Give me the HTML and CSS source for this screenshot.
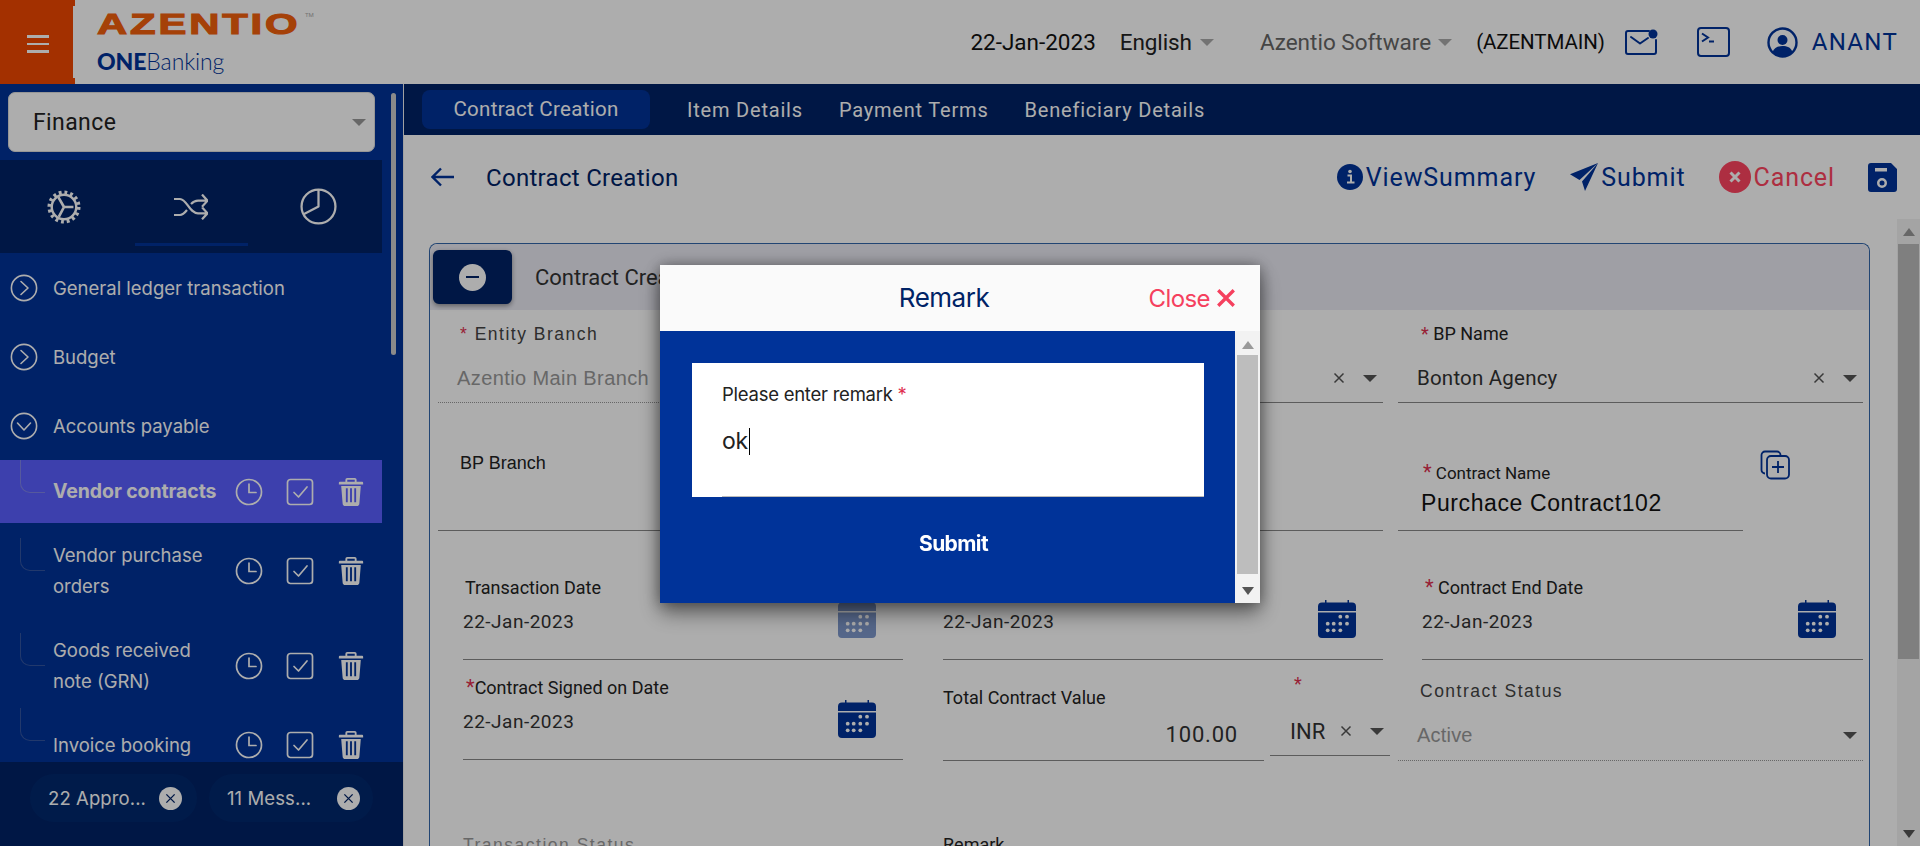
FILE: index.html
```html
<!DOCTYPE html>
<html lang="en">
<head>
<meta charset="utf-8">
<title>Contract Creation</title>
<link rel="stylesheet" href="styles.css">
</head>
<body>
<svg class="sprite" aria-hidden="true">
  <symbol id="cal" viewBox="0 0 38 38">
    <path fill="currentColor" d="M7 0h1.500v2.500h21V0H31v2.500h3a4 4 0 0 1 4 4V11H0V6.500a4 4 0 0 1 4-4h3zM0 12.500h38V34a4 4 0 0 1-4 4H4a4 4 0 0 1-4-4z"/>
    <g fill="#fff"><circle cx="22.300" cy="16.700" r="1.900"/><circle cx="29" cy="16.700" r="1.900"/><circle cx="9.700" cy="23.700" r="1.900"/><circle cx="15.700" cy="23.700" r="1.900"/><circle cx="22.300" cy="23.700" r="1.900"/><circle cx="29" cy="23.700" r="1.900"/><circle cx="9.700" cy="30.300" r="1.900"/><circle cx="15.700" cy="30.300" r="1.900"/><circle cx="22.300" cy="30.300" r="1.900"/></g>
  </symbol>
  <symbol id="clock" viewBox="0 0 28 28"><g fill="none" stroke="currentColor" stroke-width="1.7" stroke-linecap="round"><circle cx="14" cy="14" r="12.5"/><path d="M14 6v8.500h7"/></g></symbol>
  <symbol id="check" viewBox="0 0 28 28"><g fill="none" stroke="currentColor" stroke-width="1.7" stroke-linecap="round" stroke-linejoin="round"><rect x="1.500" y="1.500" width="25" height="25" rx="3"/><path d="M8 14.500l4.500 4.500L21 9"/></g></symbol>
  <symbol id="trash" viewBox="0 0 26 30"><path fill="currentColor" d="M9 0h8a2 2 0 0 1 2 2v2h6a1 1 0 0 1 1 1v2H0V5a1 1 0 0 1 1-1h6V2a2 2 0 0 1 2-2zm0 2v2h8V2zM2.500 8.500h21L22 27a3 3 0 0 1-3 3H7a3 3 0 0 1-3-3zM7.500 11v15h2V11zm4.500 0v15h2V11zm4.500 0v15h2V11z" fill-rule="evenodd"/></symbol>
  <symbol id="cross" viewBox="0 0 12 12"><path d="M1.500 1.500l9 9m0-9l-9 9" fill="none" stroke="currentColor" stroke-width="1.500"/></symbol>
  <symbol id="chev-r" viewBox="0 0 28 28"><g fill="none" stroke="currentColor" stroke-width="1.600" stroke-linecap="round" stroke-linejoin="round"><circle cx="14" cy="14" r="12.600"/><path d="M11 7.500l7 6.500-7 6.500"/></g></symbol>
  <symbol id="chev-d" viewBox="0 0 28 28"><g fill="none" stroke="currentColor" stroke-width="1.600" stroke-linecap="round" stroke-linejoin="round"><circle cx="14" cy="14" r="12.600"/><path d="M7.500 11l6.500 7 6.500-7"/></g></symbol>
</svg>

<header class="topbar">
  <button class="menu-btn" aria-label="Menu"><span></span><span></span><span></span></button>
  <div class="logo">
    <div class="logo-mark"><span class="logo-word">AZENTIO</span><span class="logo-tm">TM</span></div>
    <div class="logo-sub"><b>ONE</b>Banking</div>
  </div>
  <div class="top-right">
    <span class="top-date">22-Jan-2023</span>
    <span class="top-lang">English</span><i class="caret caret-top caret-lang"></i>
    <span class="top-org">Azentio Software</span><i class="caret caret-top caret-org"></i>
    <span class="top-code">(AZENTMAIN)</span>
    <svg class="ico-mail" viewBox="0 0 33 26"><path d="M24 2H3a2 2 0 0 0-2 2v19a2 2 0 0 0 2 2h26a2 2 0 0 0 2-2V11M6 8l9 6.500 8-5.500" fill="none" stroke="currentColor" stroke-width="2" stroke-linecap="round" stroke-linejoin="round"/><circle cx="28" cy="5" r="4.500" fill="currentColor"/></svg>
    <svg class="ico-term" viewBox="0 0 33 30"><rect x="1" y="1" width="31" height="28" rx="3" fill="none" stroke="currentColor" stroke-width="2"/><path d="M5 6.500l6 4-6 4M12 14.500h5" fill="none" stroke="currentColor" stroke-width="2"/></svg>
    <svg class="ico-user" viewBox="0 0 31 31"><circle cx="15.500" cy="15.500" r="14" fill="none" stroke="currentColor" stroke-width="2.400"/><circle cx="15.500" cy="13" r="5" fill="currentColor"/><path d="M5.500 25c1.500-4.500 5.500-6 10-6s8.500 1.500 10 6a14 14 0 0 1-20 0z" fill="currentColor"/></svg>
    <span class="top-user">ANANT</span>
  </div>
</header>

<div class="shell">
  <aside class="sidebar">
    <div class="sidebar-head">
      <div class="module-select"><span>Finance</span><i class="caret caret-grey"></i></div>
      <div class="side-thumb"></div>
    </div>
    <nav class="side-tabs">
      <div class="side-tab">
        <svg class="tab-ico" viewBox="0 0 36 36"><g fill="none" stroke="currentColor"><circle cx="18" cy="18" r="13" stroke-width="2.600"/><circle cx="18" cy="18" r="15.500" stroke-width="4" stroke-dasharray="3 3.090"/><path d="M18 18h10M18 18L12 7.500M18 18L12.500 28.500" stroke-width="2.800"/></g></svg>
      </div>
      <div class="side-tab side-tab-on">
        <svg class="tab-shuffle" viewBox="0 0 34 26"><path d="M0 5h6c7 0 9 14.300 18 14.300h9M0 21h6c3 0 5-2.500 7-5M17 10c2-2 4-3.300 7-3.300h9M28 .5l5.500 6.200-5.500 6M28 13.300l5.500 6-5.500 6" fill="none" stroke="currentColor" stroke-width="2.200" stroke-linejoin="round"/></svg>
      </div>
      <div class="side-tab">
        <svg class="tab-pie" viewBox="0 0 36 36"><g fill="none" stroke="currentColor" stroke-width="2.200" stroke-linejoin="round"><circle cx="18" cy="18" r="16.500"/><path d="M18 1.500V18L3.500 25.500"/></g></svg>
      </div>
    </nav>
    <ul class="side-list">
      <li class="side-row row-group"><svg class="side-chev"><use href="#chev-r"/></svg><span class="row-text">General ledger transaction</span></li>
      <li class="side-row row-group"><svg class="side-chev"><use href="#chev-r"/></svg><span class="row-text">Budget</span></li>
      <li class="side-row row-group"><svg class="side-chev"><use href="#chev-d"/></svg><span class="row-text">Accounts payable</span></li>
      <li class="side-row row-sub row-active"><span class="row-text">Vendor contracts</span><div class="row-acts"><svg class="act"><use href="#clock"/></svg><svg class="act"><use href="#check"/></svg><svg class="act"><use href="#trash"/></svg></div></li>
      <li class="side-row row-sub row-two"><span class="row-text">Vendor purchase orders</span><div class="row-acts"><svg class="act"><use href="#clock"/></svg><svg class="act"><use href="#check"/></svg><svg class="act"><use href="#trash"/></svg></div></li>
      <li class="side-row row-sub row-two"><span class="row-text">Goods received note (GRN)</span><div class="row-acts"><svg class="act"><use href="#clock"/></svg><svg class="act"><use href="#check"/></svg><svg class="act"><use href="#trash"/></svg></div></li>
      <li class="side-row row-sub row-last"><span class="row-text">Invoice booking</span><div class="row-acts"><svg class="act"><use href="#clock"/></svg><svg class="act"><use href="#check"/></svg><svg class="act"><use href="#trash"/></svg></div></li>
    </ul>
    <div class="side-foot">
      <div class="chip chip-a"><span>22 Appro...</span><b class="chip-x"><svg><use href="#cross"/></svg></b></div>
      <div class="chip chip-b"><span>11 Mess...</span><b class="chip-x"><svg><use href="#cross"/></svg></b></div>
    </div>
  </aside>

  <main class="main">
    <nav class="tabs">
      <a class="tab tab-on">Contract Creation</a>
      <a class="tab">Item Details</a>
      <a class="tab">Payment Terms</a>
      <a class="tab">Beneficiary Details</a>
    </nav>
    <div class="title-row">
      <svg class="back" viewBox="0 0 24 20"><path d="M23 10H2M10 1.500L1.500 10l8.500 8.500" fill="none" stroke="currentColor" stroke-width="2.400"/></svg>
      <h1 class="title">Contract Creation</h1>
      <div class="actions">
        <span class="action"><svg class="a-info" viewBox="0 0 26 26"><circle cx="13" cy="13" r="13" fill="currentColor"/><path d="M10.500 11.500h3.500v7M10 18.500h7.500" fill="none" stroke="#fff" stroke-width="2"/><circle cx="13" cy="7.500" r="1.800" fill="#fff"/></svg>ViewSummary</span>
        <span class="action"><svg class="a-send" viewBox="0 0 28 28"><path d="M28 0L0 11.300l9.500 5.700zM28 0L12 18.500 15 28z" fill="currentColor"/></svg>Submit</span>
        <span class="action action-red"><svg class="a-cancel" viewBox="0 0 32 32"><circle cx="16" cy="16" r="16" fill="currentColor"/><path d="M11.500 11.500l9 9m0-9l-9 9" stroke="#fff" stroke-width="3"/></svg>Cancel</span>
        <svg class="a-save" viewBox="0 0 29 29"><path fill="currentColor" fill-rule="evenodd" d="M3 0h20l6 6v20a3 3 0 0 1-3 3H3a3 3 0 0 1-3-3V3a3 3 0 0 1 3-3zM7 5v3.500h12V5zM14 15a5 5 0 1 0 0 10 5 5 0 0 0 0-10zm0 2.500a2.500 2.500 0 1 1 0 5 2.500 2.500 0 0 1 0-5z"/></svg>
      </div>
    </div>
    <div class="scroller">
      <div class="content">
        <section class="card">
          <div class="card-head">
            <button class="collapse" aria-label="Collapse"><span class="minus"></span></button>
            <span class="card-title">Contract Creation</span>
          </div>
          <div class="form">
            <div class="field col-a f-sel dotted">
              <label class="lab lab-spaced lab-ind"><em>*</em> Entity Branch</label>
              <div class="val val-off val-ind">Azentio Main Branch</div>
            </div>
            <div class="field col-b f-sel">
              <div class="val val-end"><svg class="x-ico"><use href="#cross"/></svg><i class="caret caret-dark"></i></div>
            </div>
            <div class="field f-sel">
              <label class="lab lab-bp"><em>*</em> BP Name</label>
              <div class="val val-sel">Bonton Agency<span class="val-tools"><svg class="x-ico"><use href="#cross"/></svg><i class="caret caret-dark"></i></span></div>
            </div>

            <div class="field span-ab f-bp">
              <label class="lab lab-ar lab-ind">BP Branch</label>
              <div class="val"></div>
            </div>
            <div class="name-wrap">
              <div class="field f-name">
                <label class="lab lab-cn"><em class="star-lg">*</em> Contract Name</label>
                <div class="val val-big">Purchace Contract102</div>
              </div>
              <svg class="copy-add" viewBox="0 0 30 30"><g fill="none" stroke="currentColor" stroke-width="1.800"><path d="M5 23.500a3.500 3.500 0 0 1-3.500-3.500V5A3.500 3.500 0 0 1 5 1.500h12A3.500 3.500 0 0 1 20.500 5"/><rect x="7" y="6" width="22" height="22.500" rx="4"/><path d="M18 11v12M12 17h12"/></g></svg>
            </div>

            <div class="field col-a f-date date-ind">
              <label class="lab lab-date lab-td">Transaction Date</label>
              <div class="val val-date">22-Jan-2023<svg class="cal cal-off"><use href="#cal"/></svg></div>
            </div>
            <div class="field col-b f-date">
              <div class="val val-date">22-Jan-2023<svg class="cal"><use href="#cal"/></svg></div>
            </div>
            <div class="field f-date end-ind">
              <label class="lab lab-date lab-end"><em class="star-lg">*</em> Contract End Date</label>
              <div class="val val-date">22-Jan-2023<svg class="cal"><use href="#cal"/></svg></div>
            </div>

            <div class="field col-a f-date date-ind f-signed">
              <label class="lab lab-date lab-signed"><em class="star-lg">*</em>Contract Signed on Date</label>
              <div class="val val-date">22-Jan-2023<svg class="cal"><use href="#cal"/></svg></div>
            </div>
            <div class="amount-wrap">
              <div class="field f-total">
                <label class="lab lab-date">Total Contract Value</label>
                <div class="val val-amount">100.00</div>
              </div>
              <div class="field f-inr">
                <label class="lab lab-star"><em>*</em></label>
                <div class="val val-inr">INR<svg class="x-ico"><use href="#cross"/></svg><i class="caret caret-dark"></i></div>
              </div>
            </div>
            <div class="field f-status dotted">
              <label class="lab lab-spaced lab-ind">Contract Status</label>
              <div class="val val-off val-sel">Active<span class="val-tools"><i class="caret caret-dark"></i></span></div>
            </div>

            <div class="field-open date-ind"><label class="lab lab-spaced lab-faint">Transaction Status</label></div>
            <div class="field-open"><label class="lab lab-date">Remark</label></div>
          </div>
        </section>
      </div>
      <div class="vscroll"><i class="sb-up"></i><div class="vthumb"></div><i class="sb-down"></i></div>
    </div>
  </main>
</div>

<div class="overlay"></div>

<div class="modal" role="dialog" aria-label="Remark">
  <div class="modal-head">
    <h2 class="modal-title">Remark</h2>
    <span class="modal-close">Close<svg viewBox="0 0 18 18"><path d="M2 2l14 14m0-14L2 16" fill="none" stroke="currentColor" stroke-width="3"/></svg></span>
  </div>
  <div class="modal-body">
    <div class="modal-main">
      <div class="remark-box">
        <label class="remark-label">Please enter remark <em>*</em></label>
        <div class="remark-input">ok<span class="text-caret"></span></div>
      </div>
      <div class="modal-submit">Submit</div>
    </div>
    <div class="modal-scroll"><i class="sb-up"></i><div class="modal-thumb"></div><i class="sb-down"></i></div>
  </div>
</div>
</body>
</html>
```
FILE: styles.css
```css
*{box-sizing:border-box}
html,body{margin:0;height:846px;overflow:hidden}
body{display:flex;flex-direction:column;background:#fff;font-family:Roboto,"Liberation Sans",sans-serif;color:#222}
.sprite{position:absolute;width:0;height:0}
em{font-style:normal;color:#e0304f}
ul{list-style:none;margin:0;padding:0}
h1,h2{margin:0;font-weight:400}
button{border:0;padding:0;cursor:pointer}

/* top bar */
.topbar{height:84px;flex:none;display:flex;align-items:stretch;background:#fff}
.menu-btn{width:75px;background:#f04700;display:flex;flex-direction:column;gap:5px;padding:35px 0 0 27px;position:relative}
.menu-btn::after{content:"";position:absolute;right:0;top:6px;bottom:6px;width:2px;background:#fff}
.menu-btn span{display:block;width:22px;height:2.500px;background:#fff}
.logo{margin-left:22px;display:flex;flex-direction:column;padding-top:6px}
.logo-mark{display:flex;height:37px;align-items:center;position:relative}
.logo-word{display:block;font:700 29px/37px "Liberation Sans",sans-serif;letter-spacing:2px;color:#f4600c;-webkit-text-stroke:1.100px #f4600c;transform:scaleX(1.44);transform-origin:0 50%;width:208px}
.logo-tm{font-size:6px;color:#aaa;margin-top:-20px}
.logo-sub{font:300 23px/30px Lato,sans-serif;color:#00339a;margin-top:3px;letter-spacing:-.1px}
.logo-sub b{font-weight:900}
.top-right{margin-left:auto;display:flex;align-items:center;padding-right:22px;height:84px}
.top-date{font-size:22.500px;color:#111;margin-right:24px}
.top-lang{font-size:22.500px;color:#222;margin-right:8px;letter-spacing:-.1px}
.caret{display:block;width:0;height:0;border-style:solid;border-color:transparent;border-width:7px 7px 0}
.caret-top{border-top-color:#aaa;border-width:7px 7.500px 0}
.caret-lang{margin-right:46px}
.top-org{font-size:22.500px;color:#666;margin-right:7px}
.caret-org{margin-right:24px}
.top-code{font-size:20.500px;color:#111;margin-right:20px;letter-spacing:-.1px}
.ico-mail{width:33px;height:26px;color:#00339a;margin-right:39px}
.ico-term{width:33px;height:30px;color:#00339a;margin-right:37px}
.ico-user{width:31px;height:31px;color:#00339a;margin-right:14px}
.top-user{font-size:24px;color:#00339a;letter-spacing:1.300px}

.shell{flex:1;display:flex;min-height:0}

/* sidebar */
.sidebar{width:404px;flex:none;background:#039;display:flex;flex-direction:column;position:relative;overflow:hidden;border-right:1px solid #eee}
.sidebar-head{height:76px;flex:none;padding:8px 0 0 8px;position:relative}
.module-select{width:367px;height:60px;background:#fff;border-radius:7px;border:1px solid #ddd;display:flex;align-items:center;justify-content:space-between;padding:0 8px 0 24px;font-size:23px;color:#222;letter-spacing:.4px}
.caret-grey{border-top-color:#999;border-width:7px 7px 0}
.side-thumb{position:absolute;left:391px;top:9px;width:5px;height:262px;border-radius:3px;background:#ccc}
.side-tabs{width:382px;height:93px;flex:none;background:#002366;display:flex}
.side-tab{flex:1;display:flex;justify-content:center;align-items:center;position:relative;color:#fff}
.side-tab-on::after{content:"";position:absolute;left:8px;right:7px;top:83px;height:3px;background:#039}
.tab-ico{width:34px;height:34px}
.tab-shuffle{width:34px;height:26px}
.tab-pie{width:37px;height:37px}
.side-list{flex:1;min-height:0;overflow:hidden;width:382px}
.side-row{display:flex;align-items:center;color:#fff;font:400 18.500px/31px Inter,sans-serif;position:relative}
.row-group{height:69px;padding-left:10px}
.row-group .row-text{padding-top:2px}
.side-chev{width:28px;height:28px;flex:none;margin-right:15px}
.row-sub{padding-left:53px}
.row-sub .row-text{flex:1;min-width:0}
.row-sub::before{content:"";position:absolute;left:20px;top:15px;height:32px;width:24px;border-left:1.500px solid #3355a0;border-bottom:1.500px solid #3355a0;border-bottom-left-radius:10px}
.row-active{height:63px;background:#5a5fff;font-weight:700;font-size:19.500px;letter-spacing:-.1px}
.row-active::before{top:0;border-color:#7f83e8}
.row-two{height:95px}
.row-two::before{top:15px}
.row-last{height:64px}
.row-last::before{top:-5px;height:32px}
.row-acts{display:flex;width:158px;flex:none;gap:23px;padding-left:11px;align-items:center}
.act{width:28px;height:28px;color:#fff;flex:none}
.side-foot{height:84px;flex:none;background:#002366;display:flex;padding:12px 0 0 30px;gap:12px}
.chip{height:48px;border-radius:24px;background:#00296e;color:#fff;display:flex;align-items:center;font:400 18.500px Inter,sans-serif;padding-left:18px;letter-spacing:.1px}
.chip-a{width:167px}
.chip-b{width:164px}
.chip-x{width:23px;height:23px;border-radius:50%;background:#fff;color:#002366;display:flex;align-items:center;justify-content:center;margin-left:auto;margin-right:15px}
.chip-b .chip-x{margin-right:13px}
.chip-x svg{width:11px;height:11px}

/* main */
.main{flex:1;min-width:0;display:flex;flex-direction:column;background:#fff}
.tabs{height:51px;flex:none;background:#002366;display:flex;align-items:center;padding-left:18px;color:#fff}
.tab{font-size:20px;letter-spacing:.8px;margin-right:36px}
.tab-on{background:#039;border-radius:8px;height:39px;line-height:39px;width:228px;text-align:center;margin:-1px 37px 0 0;letter-spacing:.3px;font-size:20.500px}
.title-row{height:84px;flex:none;display:flex;align-items:center;padding:2px 23px 0 27px;color:#00339a}
.back{width:24px;height:20px;flex:none;margin-right:31px;margin-top:-2px}
.title{font-size:24px;color:#002366;letter-spacing:.3px}
.actions{margin-left:auto;display:flex;align-items:center;margin-top:-2px}
.action{display:flex;align-items:center;font-size:25px;letter-spacing:.9px;margin-right:33px}
.action-red{color:#ff4560}
.a-info{width:26px;height:26px;margin-right:3px}
.a-send{width:28px;height:28px;margin:0 3px 0 1px}
.a-cancel{width:32px;height:32px;margin-right:3px}
.a-save{width:29px;height:29px}

.scroller{flex:1;min-height:0;display:flex}
.content{flex:1;min-width:0;padding:24px 27px 0 25px;overflow:hidden}
.card{border:1px solid #36a;border-bottom:0;border-radius:8px 8px 0 0;height:700px}
.card-head{height:66px;background:#ebebf4;display:flex;align-items:center;padding-left:3px;border-radius:8px 8px 0 0}
.collapse{width:79px;height:54px;background:#002366;border-radius:6px;box-shadow:0 2px 5px rgba(0,0,0,.4);display:flex;align-items:center;justify-content:center}
.minus{display:flex;align-items:center;justify-content:center;width:27px;height:27px;border-radius:50%;background:#fff}
.minus::before{content:"";width:13px;height:2px;background:#002366}
.card-title{font-size:22px;color:#333;margin-left:23px}

.form{display:grid;grid-template-columns:505px 455px 465px;grid-template-rows:93px 128px 129px 101px 100px;padding-left:8px}
.col-a{margin-right:40px}
.col-b{margin-right:15px}
.span-ab{grid-column:span 2;margin-right:15px}
.field{display:flex;flex-direction:column;justify-content:flex-end;border-bottom:1px solid #888;min-width:0}
.dotted{border-bottom:1px dotted #999}
.lab{display:block;line-height:20px;font-size:18px;color:#222}
.val{display:flex;align-items:center;height:28px;font-size:20.500px;color:#333}
.lab-spaced{font-family:"Liberation Sans",sans-serif;font-size:17.500px;letter-spacing:1.500px;color:#444}
.lab-ind{padding-left:22px}
.val-ind{padding-left:19px}
.val-off{color:#999;font-family:"Liberation Sans",sans-serif;letter-spacing:.4px;font-size:20px}
.val-end{justify-content:flex-end}
.x-ico{width:12px;height:12px;color:#555;flex:none}
.caret-dark{border-top-color:#555;border-width:7px 7px 0;margin-left:18px;margin-right:6px}
.val-sel{padding-left:19px;justify-content:space-between;letter-spacing:.2px}
.val-tools{display:flex;align-items:center}
.lab-bp{padding-left:23px}
.f-sel .lab{margin-bottom:20px}
.f-sel .val{margin-bottom:10px}
.lab-ar{font-family:"Liberation Sans",sans-serif;font-size:18px}
.f-bp .lab{margin-bottom:16px}
.f-bp .val{margin-bottom:13px}
.name-wrap{display:flex;align-items:flex-start}
.f-name{width:345px;height:128px}
.f-name .lab{margin-bottom:6px}
.f-name .val{margin-bottom:13px}
.lab-cn{padding-left:25px;font-size:17px}
.star-lg{font-size:20px;line-height:16px}
.val-big{padding-left:23px;font-family:"Liberation Sans",sans-serif;font-size:23px;color:#111;letter-spacing:.6px}
.copy-add{width:30px;height:30px;color:#00339a;margin:47px 0 0 17px;flex:none}
.f-date .lab{margin-bottom:9px}
.f-date .val{margin-bottom:24px}
.date-ind{margin-left:25px}
.end-ind{margin-left:24px}
.lab-end{padding-left:3px}
.lab-td{padding-left:2px}
.lab-signed{padding-left:3px;font-size:19px}
.val-date{justify-content:space-between;font-size:19px;letter-spacing:.5px;padding-right:27px}
.lab-date{font-size:18px}
.cal{width:38px;height:38px;color:#00339a;flex:none;margin-top:-4px}
.cal-off{opacity:.5}
.f-signed{margin-bottom:1px}
.amount-wrap{display:flex;align-items:flex-end}
.f-total{width:321px}
.f-total .lab{margin-bottom:12px}
.f-total .val{margin-bottom:12px}
.val-amount{justify-content:flex-end;padding-right:26px;font-size:22px;letter-spacing:.8px}
.f-inr{width:120px;margin:0 0 5px 6px;flex:none}
.lab-star{padding-left:24px}
.f-inr .lab{margin-bottom:23px}
.f-inr .val{margin-bottom:10px}
.val-inr{padding-left:20px;font-size:22px}
.val-inr .x-ico{margin-left:15px}
.val-inr .caret-dark{margin-left:18px;margin-right:0}
.f-status .lab{margin-bottom:20px}
.f-status .val{margin-bottom:11px}
.lab-faint{color:#999}
.field-open{padding-top:74px}

.vscroll{width:23px;flex:none;background:#f2f2f2;display:flex;flex-direction:column;align-items:center}
.sb-up,.sb-down{display:block;width:0;height:0;border-style:solid;border-color:transparent;flex:none}
.sb-up{border-width:0 6px 8px;border-bottom-color:#999;margin:9px 0 8px}
.sb-down{border-width:8px 6px 0;border-top-color:#555;margin:auto 0 8px}
.vthumb{width:21px;height:415px;background:#bbb}

/* overlay + dialog */
.overlay{position:fixed;inset:0;background:rgba(0,0,0,.32)}
.modal{position:fixed;left:660px;top:265px;width:600px;height:338px;background:#039;box-shadow:0 10px 20px rgba(0,0,0,.45),0 0 14px rgba(0,0,0,.35);display:flex;flex-direction:column}
.modal-head{height:66px;flex:none;background:#fafafa;display:flex;align-items:center;justify-content:center;position:relative;padding:0 32px 2px 0}
.modal-title{font-size:26px;color:#002366;font-family:Inter,sans-serif;letter-spacing:-.5px}
.modal-close{position:absolute;right:24px;top:0;height:66px;display:flex;align-items:center;gap:6px;font-size:24px;color:#f5405e;font-family:Inter,sans-serif;letter-spacing:-.6px}
.modal-close svg{width:20px;height:20px}
.modal-body{flex:1;display:flex;min-height:0}
.modal-main{flex:1;min-width:0;padding:32px 31px 0 32px;display:flex;flex-direction:column;align-items:stretch}
.remark-box{height:134px;background:#fff;padding:18px 0 0 30px;position:relative}
.remark-box::after{content:"";position:absolute;left:30px;right:0;bottom:0;height:1px;background:#bbb}
.remark-label{display:block;font:400 18.500px/26px Inter,sans-serif;color:#222;letter-spacing:-.25px}
.remark-input{font:400 23px/30px Inter,sans-serif;color:#222;margin-top:19px;display:flex;align-items:center;letter-spacing:-.3px}
.text-caret{display:block;width:1px;height:27px;background:#000;margin-left:1px}
.modal-submit{text-align:center;color:#fff;font:700 21px Inter,sans-serif;letter-spacing:-.6px;margin-top:34px;padding-left:11px}
.modal-scroll{width:25px;flex:none;background:#f2f2f2;display:flex;flex-direction:column;align-items:center}
.modal-thumb{width:21px;height:219px;background:#bdbdbd}
.modal-scroll .sb-up{margin:10px 0 6px}
.modal-scroll .sb-down{margin:auto 0 8px}
```
